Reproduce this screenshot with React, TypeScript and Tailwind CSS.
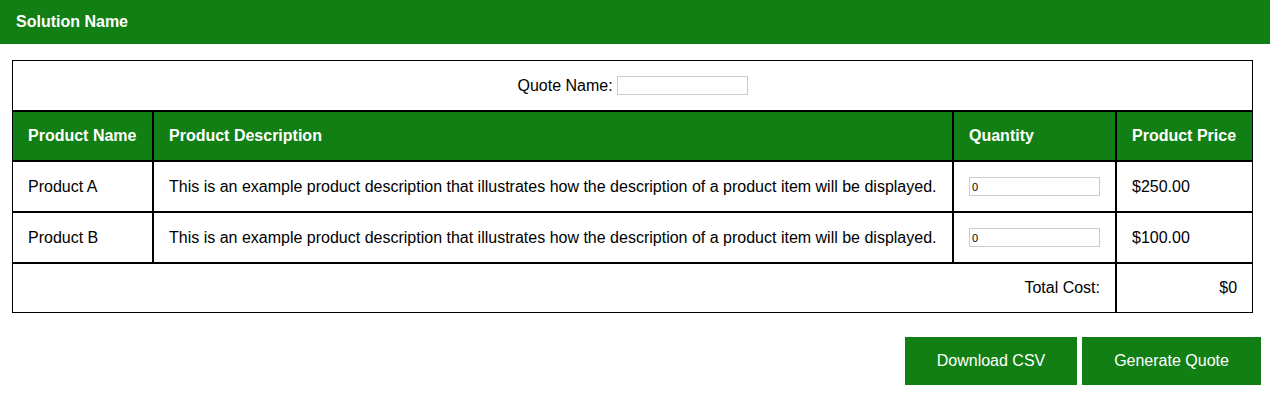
const products = [
  {
    name: "Product A",
    description:
      "This is an example product description that illustrates how the description of a product item will be displayed.",
    price: "$250.00",
  },
  {
    name: "Product B",
    description:
      "This is an example product description that illustrates how the description of a product item will be displayed.",
    price: "$100.00",
  },
];

export default function App() {
  return (
    <div className="min-h-screen bg-white font-['Liberation_Sans',Arial,sans-serif] text-black">
      <header className="flex h-[44px] items-center bg-[#117f13] px-4">
        <h1 className="text-[16px] font-bold text-white">Solution Name</h1>
      </header>

      <div className="pl-3 pr-[17px] pt-4">
        <table className="w-[1241px] table-fixed border-separate border-spacing-0 text-[16px]">
          <colgroup>
            <col className="w-[141px]" />
            <col className="w-[800px]" />
            <col className="w-[163px]" />
            <col className="w-[137px]" />
          </colgroup>
          <tbody>
            <tr>
              <td colSpan={4} className="h-[51px] border border-black text-center align-middle">
                <label className="inline-flex items-center gap-1">
                  Quote Name:
                  <input type="text" className="h-[19px] w-[131px] border border-[#cccccc] outline-none" />
                </label>
              </td>
            </tr>
            <tr className="bg-[#117f13] text-white">
              <th className="h-[50px] border border-black px-[15px] text-left font-bold">Product Name</th>
              <th className="border border-black px-[15px] text-left font-bold">Product Description</th>
              <th className="border border-black px-[15px] text-left font-bold">Quantity</th>
              <th className="border border-black px-[15px] text-left font-bold">Product Price</th>
            </tr>
            {products.map((p) => (
              <tr key={p.name}>
                <td className="h-[51px] border border-black px-[15px]">{p.name}</td>
                <td className="border border-black px-[15px]">{p.description}</td>
                <td className="border border-black px-[15px]">
                  <input
                    type="text"
                    defaultValue="0"
                    className="block h-[19px] w-[131px] border border-[#cccccc] px-[2px] text-[11px] text-black outline-none"
                  />
                </td>
                <td className="border border-black px-[15px]">{p.price}</td>
              </tr>
            ))}
            <tr>
              <td colSpan={3} className="h-[50px] border border-black px-[15px] text-right">
                Total Cost:
              </td>
              <td className="border border-black px-[15px] text-right">$0</td>
            </tr>
          </tbody>
        </table>
      </div>

      <div className="flex justify-end gap-[5px] pr-[9px] pt-[24px]">
        <button className="h-[48px] w-[172px] bg-[#117f13] text-[16px] text-white">Download CSV</button>
        <button className="h-[48px] w-[179px] bg-[#117f13] text-[16px] text-white">Generate Quote</button>
      </div>
    </div>
  );
}
